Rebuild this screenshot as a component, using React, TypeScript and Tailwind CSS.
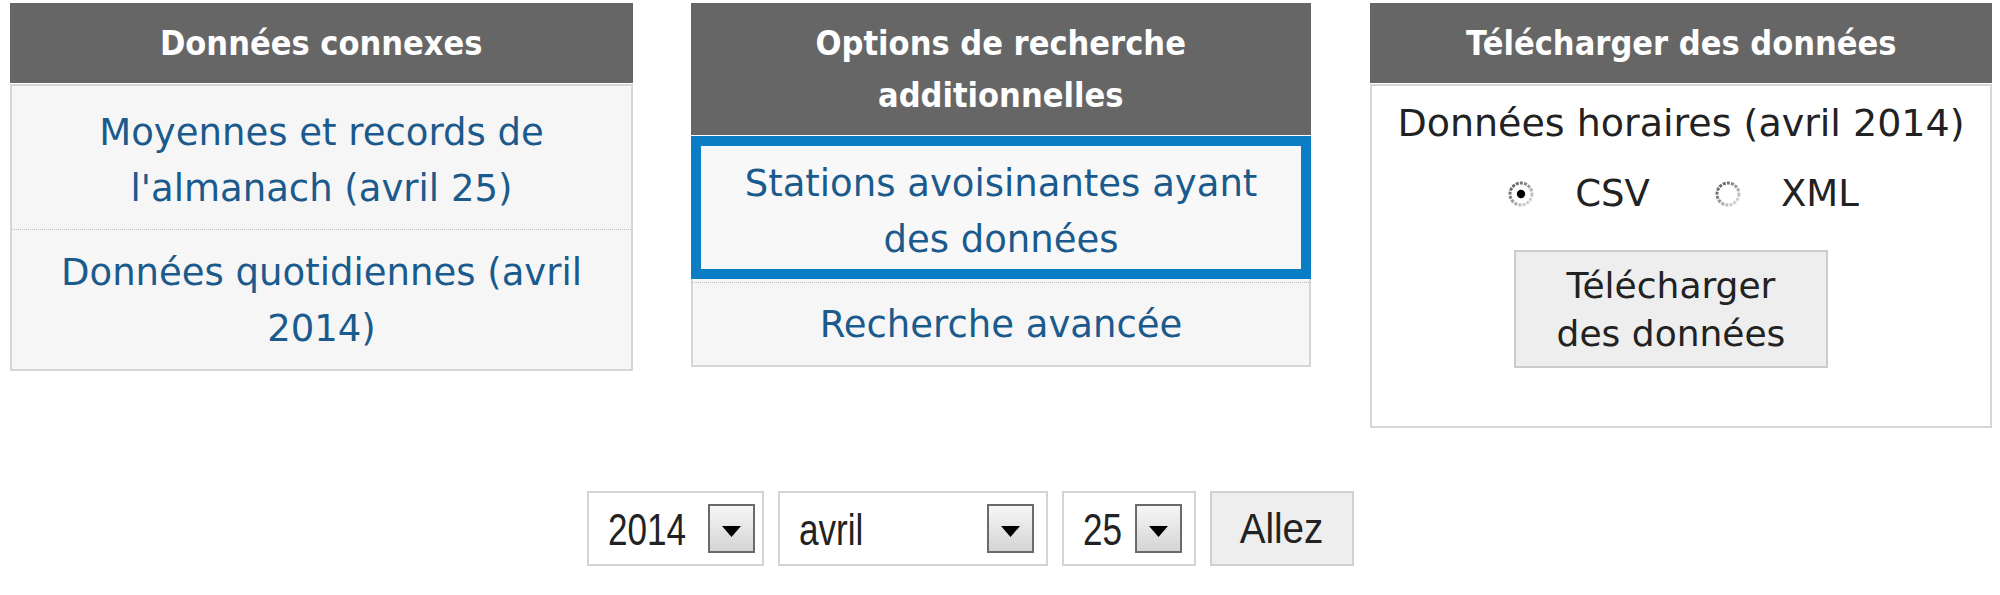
import React from "react";

function Header({ children }: { children: React.ReactNode }) {
  return (
    <div className="bg-[#666666] text-white font-bold text-center py-[14px] leading-[52px] text-[34px] font-['DejaVu_Sans',sans-serif]">
      <span className="inline-block scale-x-[0.9] origin-center whitespace-nowrap">{children}</span>
    </div>
  );
}

function Arrow() {
  return (
    <div className="w-[47px] h-[49px] border-2 border-[#6a6a6a] bg-linear-to-b from-[#f7f7f7] to-[#d4d4d4] flex items-center justify-center shrink-0">
      <svg width="19" height="11" viewBox="0 0 19 11" className="mt-[6px]">
        <path d="M0 0 L19 0 L9.5 11 Z" fill="#000" />
      </svg>
    </div>
  );
}

function Select({ width, value }: { width: string; value: string }) {
  return (
    <div className={`${width} h-[75px] border-2 border-[#d4d4d4] bg-white flex items-center justify-between pl-[19px] pr-[12px] font-['Liberation_Sans',Arial,sans-serif] text-[45px] text-[#222]`}>
      <span className="inline-block origin-left scale-x-[0.78] leading-none mt-[2px]">{value}</span>
      <Arrow />
    </div>
  );
}

function Radio({ checked, id }: { checked: boolean; id: string }) {
  return (
    <svg width="28" height="28" viewBox="0 0 28 28" className="shrink-0">
      <defs>
        <linearGradient id={id} x1="0" y1="0" x2="1" y2="1">
          <stop offset="0" stopColor="#555555" />
          <stop offset="0.5" stopColor="#9a9a9a" />
          <stop offset="1" stopColor="#e6e6e6" />
        </linearGradient>
      </defs>
      <circle cx="14" cy="14" r="11" fill="#fff" stroke={`url(#${id})`} strokeWidth="3" strokeDasharray="3 1.2" />
      {checked && <circle cx="14" cy="14" r="4.2" fill="#000" />}
    </svg>
  );
}

export default function App() {
  return (
    <div className="w-[2000px] h-[595px] bg-white overflow-hidden font-['DejaVu_Sans',sans-serif]">
      <div className="flex items-start pl-[10px] pt-[3px]">
        {/* Panel 1 */}
        <div className="w-[623px] shrink-0">
          <Header>Données connexes</Header>
          <div className="mt-[1px] border-2 border-[#d6d6d6] bg-[#f6f6f6] text-center text-[37px] leading-[56px] text-[#1b5a8c]">
            <div className="pt-[19px] pb-[12px] px-[20px] border-b border-dotted border-[#bdbdbd]">
              Moyennes et records de l'almanach (avril 25)
            </div>
            <div className="pt-[15px] pb-[12px] px-[20px]">Données quotidiennes (avril 2014)</div>
          </div>
        </div>

        {/* Panel 2 */}
        <div className="w-[620px] shrink-0 ml-[58px]">
          <Header>
            Options de recherche
            <br />
            additionnelles
          </Header>
          <div className="mt-[1px] border-2 border-[#d6d6d6] bg-[#f6f6f6] text-center text-[37px] leading-[56px] text-[#1b5a8c]">
            <div className="-mx-[2px] -mt-[2px] border-b border-dotted border-[#bdbdbd] pb-[3px]">
              <div className="border-[10px] border-[#0a7dc5] bg-[#f8f8f8] pt-[10px] pb-[1px] px-[8px]">
                Stations avoisinantes ayant des données
              </div>
            </div>
            <div className="pt-[14px] pb-[12px] px-[20px]">Recherche avancée</div>
          </div>
        </div>

        {/* Panel 3 */}
        <div className="w-[622px] shrink-0 ml-[59px]">
          <Header>Télécharger des données</Header>
          <div className="mt-[1px] border-2 border-[#d6d6d6] bg-white text-center text-[#222] flex flex-col items-center pt-[9px] pb-[58px]">
            <div className="text-[38px] leading-[56px] whitespace-nowrap">Données horaires (avril 2014)</div>
            <div className="mt-[15px] h-[56px] flex items-center text-[37px] pl-[4px]">
              <Radio checked id="r1" />
              <span className="ml-[40px]">CSV</span>
              <span className="ml-[64px] flex items-center">
                <Radio checked={false} id="r2" />
              </span>
              <span className="ml-[39px]">XML</span>
            </div>
            <button className="mt-[28px] w-[314px] border-2 border-[#cccccc] bg-[#eeeeee] pt-[10px] pb-[8px] text-[36px] leading-[48px] text-[#222] -ml-[20px]">
              Télécharger
              <br />
              des données
            </button>
          </div>
        </div>
      </div>

      {/* Bottom controls */}
      <div className="mt-[63px] flex items-center pl-[587px] gap-[14px]">
        <Select width="w-[177px]" value="2014" />
        <Select width="w-[270px]" value="avril" />
        <Select width="w-[134px]" value="25" />
        <button className="w-[144px] h-[75px] border-2 border-[#d0d0d0] bg-[#eeeeee] flex items-center justify-center font-['Liberation_Sans',Arial,sans-serif] text-[42px] text-[#222]">
          <span className="inline-block scale-x-[0.92] leading-none">Allez</span>
        </button>
      </div>
    </div>
  );
}
